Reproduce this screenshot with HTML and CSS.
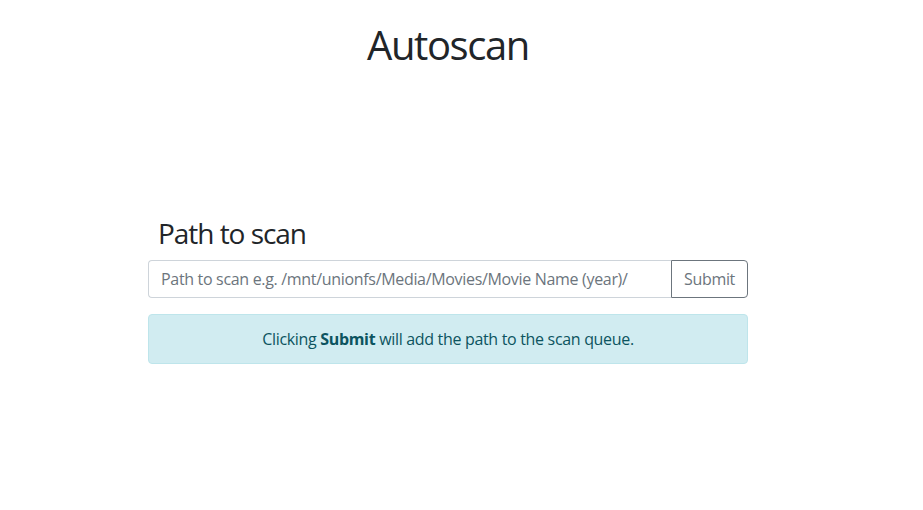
FILE: index.html
```html
<!DOCTYPE html>
<html lang="en">
<head>
<meta charset="utf-8">
<title>Autoscan</title>
<link rel="stylesheet" href="styles.css">
</head>
<body>
<div class="page">
  <header class="page-header">
    <h1 class="title">Autoscan</h1>
  </header>
  <main class="panel">
    <h3 class="panel-title">Path to scan</h3>
    <form class="input-group" onsubmit="return false;">
      <input class="path-input" type="text" placeholder="Path to scan e.g. /mnt/unionfs/Media/Movies/Movie Name (year)/">
      <button class="submit-btn" type="submit">Submit</button>
    </form>
    <div class="alert">Clicking <b>Submit</b> will add the path to the scan queue.</div>
  </main>
</div>
</body>
</html>
```

FILE: styles.css
```css
* { box-sizing: border-box; }
html, body { margin: 0; padding: 0; background: #fff; }
body {
  font-family: "Open Sans", "Noto Sans", sans-serif;
  font-size: 16px;
  line-height: 1.5;
  color: #212529;
  letter-spacing: -0.02em;
}
.page { width: 896px; }
.page-header { text-align: center; padding-top: 21px; }
.title {
  margin: 0;
  font-size: 40px;
  font-weight: 400;
  line-height: 48px;
  letter-spacing: -0.035em;
}
.panel { width: 600px; margin: 147px auto 0; }
.panel-title {
  margin: 0 0 10px;
  padding-left: 10px;
  font-size: 28px;
  font-weight: 400;
  line-height: 34px;
  letter-spacing: -0.037em;
}
.input-group { display: flex; margin: 0; }
.path-input {
  flex: 1;
  min-width: 0;
  height: 38px;
  padding: 6px 12px;
  font: inherit;
  font-size: 16px;
  letter-spacing: -0.02em;
  color: #495057;
  border: 1px solid #ced4da;
  border-right: 0;
  border-radius: 4px 0 0 4px;
  outline: none;
}
.path-input::placeholder { color: #6c757d; opacity: 1; }
.submit-btn {
  height: 38px;
  padding: 6px 12px;
  font: inherit;
  font-size: 16px;
  letter-spacing: -0.02em;
  color: #6c757d;
  background: transparent;
  border: 1px solid #6c757d;
  border-radius: 0 4px 4px 0;
}
.alert {
  margin-top: 16px;
  padding: 12px 20px;
  text-align: center;
  color: #0c5460;
  background: #d1ecf1;
  border: 1px solid #bee5eb;
  border-radius: 4px;
}
.alert b { font-weight: 700; }
```
